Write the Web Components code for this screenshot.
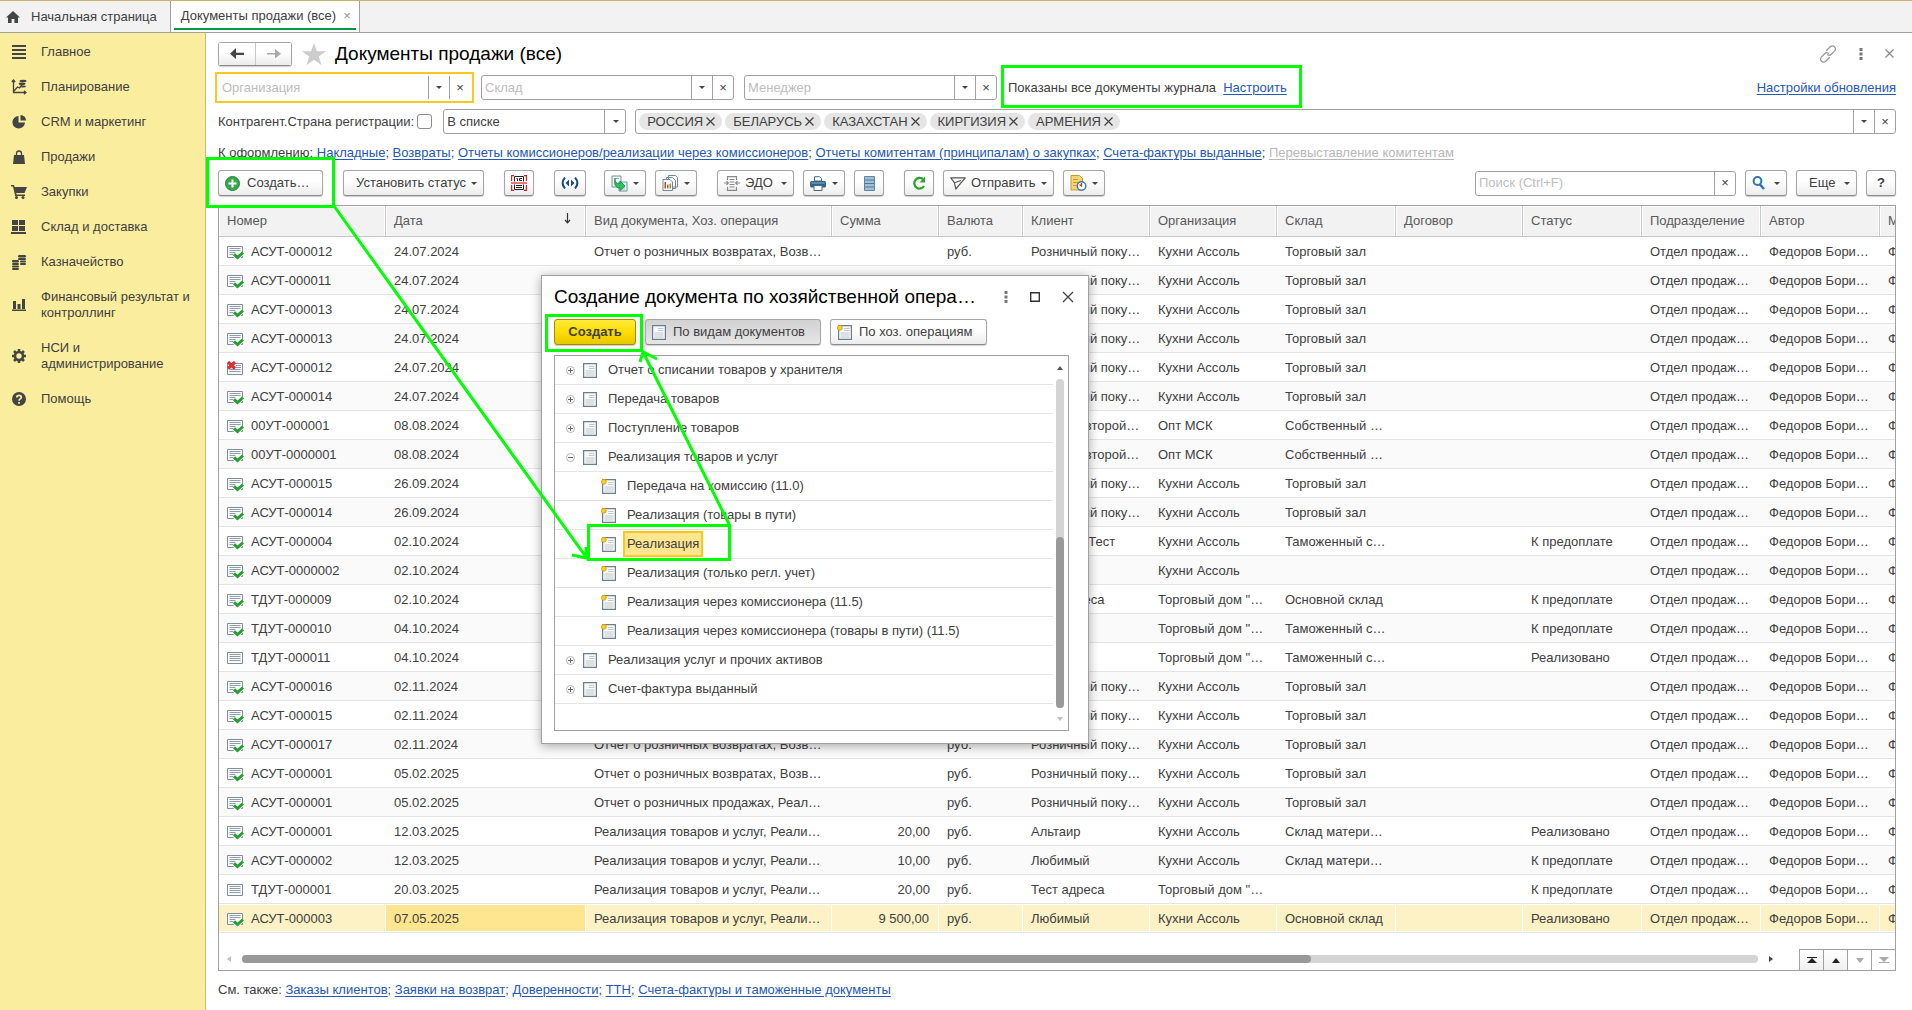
<!DOCTYPE html>
<html lang="ru">
<head>
<meta charset="utf-8">
<title>Документы продажи (все)</title>
<style>
  html, body { height: 100%; }
  body {
    margin: 0;
    overflow: hidden;
    background: #fff;
    color: #404040;
    font: 13px/16px "Liberation Sans", Arial, sans-serif;
  }
</style>
</head>
<body>
<sales-app></sales-app>

<script>
(function() {
  const ICONS = {
    home: ['0 0 14 14', '<path fill="#444" d="M7 1 0 7.6h2V13h3.600V9h2.800v4H12V7.600h2z"/>'],
    menu: ['0 0 14 14', '<path fill="#444" d="M0 0h14v2H0zm0 4h14v2H0zm0 4h14v2H0zm0 4h14v2H0z"/>'],
    plan: ['0 0 16 16', '<path fill="none" stroke="#444" stroke-width="1.300" d="M2.500 1v12.500H15M3 12l3.500-4 2 1 3-4M.8 3 2.500 1l1.700 2M13 11.800l2 1.700-2 1.700"/><g fill="#444"><ellipse cx="12" cy="2" rx="3.500" ry="1.200"/><ellipse cx="11" cy="4.800" rx="3.500" ry="1.200"/><ellipse cx="12" cy="7.500" rx="3" ry="1.100"/></g>'],
    pie: ['0 0 14 14', '<path fill="#444" d="M6.500 1v6.500H13A6.300 6.300 0 1 1 6.500 1z"/><path fill="#444" d="M8.500 0A5.500 5.500 0 0 1 14 5.500H8.500z"/>'],
    bag: ['0 0 12 15', '<path fill="#444" d="M1 5h10l1 9H0z"/><path fill="none" stroke="#444" stroke-width="1.300" d="M3.500 7V3.500a2.500 2.500 0 0 1 5 0V7"/>'],
    cart: ['0 0 16 14', '<path fill="#444" d="M0 0h3l.6 2H16l-2.500 6H5.200l.4 1.500H14V11H4.200L2 1.500H0z"/><circle cx="5.500" cy="12.500" r="1.500" fill="#444"/><circle cx="12" cy="12.500" r="1.500" fill="#444"/>'],
    stock: ['0 0 15 14', '<path fill="#444" d="M1 0h6v5H1zm7 0h6v5H8zM1 6h6v5H1zm7 0h6v5H8zM0 12h15v2H0z"/>'],
    coins: ['0 0 14 15', '<g fill="#444"><rect x="6" y="0" width="8" height="2.500" rx="1.200"/><rect x="6" y="3" width="8" height="2" rx="1"/><rect x="8" y="5.500" width="6" height="2" rx="1"/><rect x="8" y="8" width="6" height="2" rx="1"/><rect x="0" y="5" width="7" height="2.500" rx="1.200"/><rect x="0" y="8" width="7" height="2" rx="1"/><rect x="0" y="10.500" width="7" height="2" rx="1"/><rect x="0" y="13" width="7" height="2" rx="1"/></g>'],
    bars: ['0 0 14 12', '<path fill="#444" d="M1 2h3v8H1zm4.500 3h3v5h-3zM10 0h3v10h-3zM0 10.500h14V12H0z"/>'],
    gear: ['0 0 14 14', '<circle cx="7" cy="7" r="4" fill="none" stroke="#444" stroke-width="2.600"/><path stroke="#444" stroke-width="2.600" d="M7 0v2.500M7 11.500V14M0 7h2.500M11.500 7H14M2 2l1.800 1.800M10.200 10.200 12 12M12 2l-1.800 1.800M3.800 10.200 2 12"/>'],
    help: ['0 0 14 14', '<circle cx="7" cy="7" r="7" fill="#444"/><path fill="none" stroke="#fbed9e" stroke-width="1.800" d="M4.800 5.500C4.800 2.600 9.300 2.700 9.300 5.300 9.300 7 7 6.800 7 8.800M7 10v1.800"/>'],
    back: ['0 0 14 12', '<path fill="#444" d="M6 0v4.700h8v2.300H6v4L0 5.800z"/>'],
    forward: ['0 0 14 12', '<path fill="#aaa" d="M8 1v4h-8v1.600h8v4l6-4.800z"/>'],
    star: ['0 0 24 22', '<path fill="#ccc" d="m12 0 2.900 8.200H24l-7.200 5.200 2.600 8.600-7.400-5.200L4.600 22l2.600-8.600L0 8.200h9.100z"/>'],
    link: ['0 0 18 18', '<g fill="none" stroke="#999" stroke-width="1.300" stroke-linecap="round"><path d="m7.500 5.500 3.700-3.700a3 3 0 0 1 4.300 0 3 3 0 0 1 0 4.300l-3.200 3.200a3 3 0 0 1-3.700.5"/><path d="m10.500 12.500-3.700 3.700a3 3 0 0 1-4.300 0 3 3 0 0 1 0-4.300l3.200-3.200a3 3 0 0 1 3.700-.5"/></g>'],
    dots: ['0 0 4 12', '<path fill="#777" d="M.5 0h3v3h-3zm0 4.500h3v3h-3zm0 4.500h3v3h-3z"/>'],
    close: ['0 0 12 12', '<path stroke="currentColor" stroke-width="1.300" d="m1 1 10 10M11 1 1 11"/>'],
    cross: ['0 0 9 9', '<path stroke="currentColor" stroke-width="1.200" d="m.5.5 8 8M8.500.5l-8 8"/>'],
    square: ['0 0 10 10', '<path fill="none" stroke="#333" stroke-width="1.400" d="M.7.7h8.600v8.600H.7z"/>'],
    caret: ['0 0 6 3', '<path fill="#444" d="M0 0h6L3 3z"/>'],
    plus: ['0 0 15 15', '<circle cx="7.500" cy="7.500" r="7" fill="#36a84b" stroke="#26833a"/><path fill="#fff" d="M6.500 3.500h2v3h3v2h-3v3h-2v-3h-3v-2h3z"/>'],
    barcode: ['0 0 16 16', '<path fill="none" stroke="#d22" stroke-width="1.200" d="M3 .6H.6V6M13 .6h2.400V6M3 15.400H.6V10M13 15.400h2.400V10"/><path fill="none" stroke="#222" d="M3.500 6.500v-5h9v5M6.500 6V3.500h-1M11 3.500H8.500v2H11M3.500 9.500v5h9v-5"/><path stroke="#d22" stroke-width="1.200" d="M0 8h16"/><path stroke="#222" d="M5 10.500h6m-6 2h6"/>'],
    signal: ['0 0 18 12', '<path fill="none" stroke="#1d4f72" stroke-width="2" d="M4 .5Q-.8 6 4 11.500M14 .5q4.800 5.500 0 11"/><path fill="#1d4f72" d="M8 2.500v7L4.500 6zm2 0v7L13.500 6z"/>'],
    based: ['0 0 17 17', '<path fill="#eef3f6" stroke="#7890a0" d="M1 1h9v11H1zM8 7h8v9H8z"/><path stroke="#9fb0bc" d="M3 3.500h5M10 12h4m-4 2h4"/><path fill="#25c45c" stroke="#128a3c" stroke-width=".8" d="M4 3.500c0 4 1.500 5 5 5V6l5 5-5 4.500V13c-4 0-6.500-3-5-9.500z"/>'],
    report: ['0 0 17 16', '<path fill="#fff" stroke="#71889a" d="M6.500.5h7l2 2V12h-9zM4.500 2.500h6l3 3v8h-9z"/><path fill="#fff" stroke="#71889a" d="M1 4.500h7l2.500 2.500v8.500H1z"/><path fill="#e33" d="M2.500 7h1.500v6.500H2.500z"/><path fill="#2a9d3e" d="M5 9.500h1.500v4H5z"/><path fill="#e96a2c" d="M7.500 8.500H9v5H7.500z"/>'],
    edo: ['0 0 16 15', '<path fill="none" stroke="#888" stroke-width="1.200" d="M3.500 4V.6h9V4M3.500 11v3.400h9V11M5.500 3.500h5m-5 2.500h5m-5 2.500h5m-5 2.500h5M0 7h4M2.500 5.200 4.300 7 2.500 8.800M12 7h4M13.500 5.200 11.700 7l1.800 1.800"/>'],
    print: ['0 0 16 15', '<path fill="#fff" stroke="#466b88" d="M4.500 5V.7h5l2 2V5z"/><rect y="5" width="16" height="6.500" rx="1.500" fill="#34648c"/><path fill="#86aecb" d="M1.500 6.500h13v1h-13z"/><path fill="#fff" stroke="#466b88" d="M4 9.500h8v5H4z"/>'],
    list: ['0 0 11 15', '<path fill="#9dc0d8" stroke="#5d86a3" d="M.5.5h10v14H.5z"/><path stroke="#4e7896" d="M1 4h9M1 7.500h9M1 11h9"/>'],
    refresh: ['0 0 14 14', '<path fill="none" stroke="#2ba52e" stroke-width="2.300" d="M12 10.200A5.300 5.300 0 1 1 10.800 3"/><path fill="#2ba52e" d="M13 .5v6H7.500z"/>'],
    send: ['0 0 16 13', '<path fill="none" stroke="#555" stroke-width="1.200" stroke-linejoin="round" d="M.8.8h14.400L5.800 12 4.500 5.800zM4.500 5.800 11 3.500"/>'],
    schedule: ['0 0 17 16', '<path fill="#f7d774" stroke="#c79b2e" d="M1 .5h8.500l3 3V15H1z"/><path stroke="#c79b2e" d="M3 4.500h5m-5 3h5m-5 3h3"/><circle cx="11.500" cy="11" r="4.300" fill="#fff" stroke="#3b77a8" stroke-width="1.400"/><path fill="none" stroke="#c33" stroke-width="1.200" d="M9.500 9.500 11.500 11V8"/>'],
    search: ['0 0 13 14', '<circle cx="5.500" cy="5" r="3.900" fill="none" stroke="#2e77b5" stroke-width="2"/><path stroke="#2e77b5" stroke-width="2.600" d="m8 8.500 4 4.500"/>'],
    sort: ['0 0 7 11', '<path fill="none" stroke="#333" stroke-width="1.200" d="M3.500 0v9.500M1 7l2.500 2.800L6 7"/>'],
    doc: ['0 0 17 15', '<path fill="#fbfcfd" stroke="#7e8fa0" d="M.5 1.500h15v11H.5z"/><path stroke="#8f9dab" d="M2.500 3.500h11m-11 2h11m-11 2h11m-11 2h11"/>'],
    posted: ['0 0 17 15', '<path fill="#fbfcfd" stroke="#7e8fa0" d="M.5 1.500h15v11H.5z"/><path stroke="#8f9dab" d="M2.500 3.500h11m-11 2h11m-11 2h6m-6 2h4"/><path fill="none" stroke="#fff" stroke-width="5" d="m7 9.300 3.500 3.200L15.500 7.500"/><path fill="none" stroke="#24a02e" stroke-width="3" d="m7 9.300 3.500 3.200L16 7.500"/>'],
    deleted: ['0 0 17 15', '<path fill="#fbfcfd" stroke="#7e8fa0" d="M.5 2.500h15v11H.5z"/><path stroke="#8f9dab" d="M9 4.500h5M9 6.500h5M2.500 8.500h11m-11 2h11"/><path stroke="#dc3030" stroke-width="3.200" d="m1 1 7 6.500M8 1 1 7.500"/>'],
    kind: ['0 0 14 15', '<path fill="#f8f9fa" stroke="#6c7f8f" stroke-width="1.200" d="M.6.600h12.800v13.800H.6z"/><path stroke="#c3c9ce" stroke-width="1.200" d="M6 3.500h5.500M6 5.500h5.500M2.500 8h9m-9 2h9m-9 2h9"/>'],
    oper: ['0 0 15 15', '<path fill="#f8f9fa" stroke="#6c7f8f" stroke-width="1.200" d="M1.600.6h12.800v13.800H1.600z"/><path stroke="#c3c9ce" stroke-width="1.200" d="M7 3.500h5.500M7 5.500h5.500M3.500 8h9m-9 2h9m-9 2h9"/><circle cx="2.800" cy="2.800" r="2.500" fill="#fbce1f" stroke="#c79a1a" stroke-width=".7"/>'],
    expand: ['0 0 9 9', '<circle cx="4.500" cy="4.500" r="4" fill="#fff" stroke="#aaa" stroke-width=".9"/><path stroke="#666" d="M2 4.500h5M4.500 2v5"/>'],
    collapse: ['0 0 9 9', '<circle cx="4.500" cy="4.500" r="4" fill="#fff" stroke="#aaa" stroke-width=".9"/><path stroke="#666" d="M2 4.500h5"/>'],
    up: ['0 0 8 5', '<path fill="currentColor" d="m4 0 4 5H0z"/>'],
    upsmall: ['0 0 6 4', '<path fill="currentColor" d="m3 0 3 4H0z"/>'],
    down: ['0 0 8 5', '<path fill="currentColor" d="M0 0h8L4 5z"/>'],
    downsmall: ['0 0 6 4', '<path fill="currentColor" d="M0 0h6L3 4z"/>'],
    left: ['0 0 4 6', '<path fill="currentColor" d="M4 0v6L0 3z"/>'],
    right: ['0 0 4 6', '<path fill="currentColor" d="M0 0v6l4-3z"/>'],
    first: ['0 0 10 6', '<path fill="currentColor" d="M0 0h10v1H0zm5 1 5 5H0z"/>'],
    last: ['0 0 10 6', '<path fill="currentColor" d="M0 5h10v1H0zM0 0h10L5 5z"/>']
  };

  const LINK_CSS = 'a { color: #2558b5; text-decoration: underline; text-underline-offset: 2px; text-decoration-thickness: 1px; }';

  class UiIcon extends HTMLElement {
    connectedCallback() {
      const [box, body] = ICONS[this.getAttribute('name')];
      const size = box.split(' ');
      this.attachShadow({ mode: 'open' }).innerHTML = `
        <style>
          :host { display: inline-flex; flex: none; }
          svg { display: block; }
        </style>
        <svg viewBox="${box}" width="${size[2]}" height="${size[3]}" aria-hidden="true">${body}</svg>
      `;
    }
  }

  // Push button. kind: primary | pressed, menu adds the drop-down caret
  class UiButton extends HTMLElement {
    connectedCallback() {
      const icon = this.getAttribute('icon');
      const label = this.getAttribute('label');
      this.attachShadow({ mode: 'open' }).innerHTML = `
        <style>
          :host { display: inline-flex; flex: none; }
          button {
            display: flex;
            flex: 1;
            align-items: center;
            justify-content: center;
            gap: 7px;
            height: 26px;
            padding: 0 6px;
            border: 1px solid #a6a6a6;
            border-bottom-color: #8c8c8c;
            border-radius: 3px;
            background: linear-gradient(#fff 40%, #ececec);
            box-shadow: 0 1px 1px #0003;
            color: #404040;
            font: inherit;
            white-space: nowrap;
          }
          :host([text]) button { justify-content: flex-start; }
          :host([menu]) button { gap: 5px; }
          :host([menu]:not([icon])) button { padding-left: 12px; }
          .caret { margin-left: auto; }
          :host([kind=primary]) button {
            background: linear-gradient(#ffea3d, #fedd00 50%, #e8c800);
            border-color: #a08c00;
            font-weight: bold;
          }
          :host([kind=pressed]) button { background: linear-gradient(#d2d2d2, #e6e6e6); }
        </style>
        <button type="button" ${label ? `aria-label="${label}"` : ''}>
          ${icon ? `<ui-icon name="${icon}"></ui-icon>` : ''}
          <slot></slot>
          ${this.hasAttribute('menu') ? '<ui-icon class="caret" name="caret"></ui-icon>' : ''}
        </button>
      `;
    }
  }

  // Text field with optional drop-down and clear buttons
  class UiField extends HTMLElement {
    connectedCallback() {
      const hint = this.getAttribute('placeholder') || '';
      this.attachShadow({ mode: 'open' }).innerHTML = `
        <style>
          :host {
            display: flex;
            box-sizing: border-box;
            height: 25px;
            border: 1px solid #a0a0a0;
            border-radius: 3px;
            background: #fff;
          }
          :host([active]) { border-color: #fff; outline: 2px solid #fac81e; outline-offset: 1px; border-radius: 0; }
          ::slotted(*) { flex: none; }
          input {
            flex: 1;
            min-width: 0;
            border: 0;
            padding: 0 3px;
            background: none;
            font: inherit;
            outline: none;
          }
          input::placeholder { color: #bdbdbd; }
          button {
            width: 21px;
            padding: 0;
            border: 0;
            border-left: 1px solid #a0a0a0;
            background: none;
            display: flex;
            align-items: center;
            justify-content: center;
            font: inherit;
            color: #404040;
          }
        </style>
        <slot></slot>
        <input type="text" placeholder="${hint}" aria-label="${hint || this.getAttribute('label')}">
        ${this.hasAttribute('menu') ? '<button type="button" aria-label="Выбрать"><ui-icon name="caret"></ui-icon></button>' : ''}
        <button type="button" aria-label="Очистить">×</button>
      `;
    }
  }

  class UiChip extends HTMLElement {
    connectedCallback() {
      this.attachShadow({ mode: 'open' }).innerHTML = `
        <style>
          :host {
            display: flex;
            align-items: center;
            gap: 3px;
            height: 17px;
            padding: 0 7px 0 8px;
            border-radius: 9px;
            background: #e5e5e5;
          }
          button { display: flex; padding: 0; border: 0; background: none; color: #404040; }
        </style>
        <slot></slot>
        <button type="button" aria-label="Убрать"><ui-icon name="cross"></ui-icon></button>
      `;
    }
  }

  class TabBar extends HTMLElement {
    connectedCallback() {
      this.attachShadow({ mode: 'open' }).innerHTML = `
        <style>
          :host {
            display: flex;
            box-sizing: border-box;
            height: 33px;
            border-top: 1px solid #c9b36b;
            border-bottom: 1px solid #a0a0a0;
            background: #f2f2f2;
          }
          a {
            display: flex;
            align-items: center;
            gap: 11px;
            padding: 0 13px 0 6px;
            border-right: 1px solid #a0a0a0;
            color: #404040;
            text-decoration: none;
          }
          .current { box-sizing: border-box; padding: 0 0 2px; background: #fff; }
          .current span {
            display: flex;
            gap: 7px;
            box-sizing: border-box;
            height: 100%;
            align-items: center;
            margin: 0 3px;
            padding: 2px 5px 0 7px;
            border-bottom: 2px solid #009646;
          }
          i { font-style: normal; color: #999; }
        </style>
        <a href="#home"><ui-icon name="home"></ui-icon>Начальная страница</a>
        <a href="#sales" class="current"><span>Документы продажи (все) <i>×</i></span></a>
      `;
    }
  }

  class SideNav extends HTMLElement {
    connectedCallback() {
      const items = [
        ['menu', 'Главное'], ['plan', 'Планирование'], ['pie', 'CRM и маркетинг'],
        ['bag', 'Продажи'], ['cart', 'Закупки'], ['stock', 'Склад и доставка'],
        ['coins', 'Казначейство'], ['bars', 'Финансовый результат и контроллинг'],
        ['gear', 'НСИ и администрирование'], ['help', 'Помощь']
      ];
      this.attachShadow({ mode: 'open' }).innerHTML = `
        <style>
          :host {
            display: block;
            flex: none;
            box-sizing: border-box;
            width: 206px;
            padding-top: 1px;
            border-right: 1px solid #c9b97a;
            background: #fbed9e;
          }
          a {
            display: grid;
            grid-template-columns: 15px 1fr;
            align-items: center;
            gap: 15px;
            min-height: 35px;
            box-sizing: border-box;
            padding: 10px 10px 9px 11px;
            color: #404040;
            text-decoration: none;
          }
          ui-icon { justify-self: center; }
        </style>
        <nav>${items.map(([icon, text]) => `<a href="#${icon}"><ui-icon name="${icon}"></ui-icon>${text}</a>`).join('')}</nav>
      `;
    }
  }

  // "Label: link; link; link"
  class LinkRow extends HTMLElement {
    connectedCallback() {
      const links = this.getAttribute('links').split('|').map(text => {
        const off = text.startsWith('!');
        return `<a href="#"${off ? ' class="off"' : ''}>${off ? text.slice(1) : text}</a>`;
      });
      this.attachShadow({ mode: 'open' }).innerHTML = `
        <style>
          ${LINK_CSS}
          :host { display: block; padding-top: 2px; white-space: nowrap; }
          .off { color: #b8b8b8; }
        </style>
        <slot></slot> ${links.join('; ')}
      `;
    }
  }

  class JournalTable extends HTMLElement {
    connectedCallback() {
      const cols = [
        ['Номер', 167], ['Дата', 200], ['Вид документа, Хоз. операция', 246], ['Сумма', 107],
        ['Валюта', 84], ['Клиент', 127], ['Организация', 127], ['Склад', 119], ['Договор', 127],
        ['Статус', 119], ['Подразделение', 119], ['Автор', 119], ['Менеджер', 119]
      ];
      const back = 'Отчет о розничных возвратах, Возв…';
      const sold = 'Отчет о розничных продажах, Реал…';
      const sale = 'Реализация товаров и услуг, Реали…';
      const retail = 'Розничный поку…';
      const kitchen = 'Кухни Ассоль';
      const house = 'Торговый дом "…';
      const hall = 'Торговый зал';
      const customs = 'Таможенный с…';
      // state, number, date, kind, sum, client, organization, warehouse, status
      const rows = [
        ['posted', 'АСУТ-000012', '24.07.2024', back, '', retail, kitchen, hall, ''],
        ['posted', 'АСУТ-000011', '24.07.2024', back, '', retail, kitchen, hall, ''],
        ['posted', 'АСУТ-000013', '24.07.2024', back, '', retail, kitchen, hall, ''],
        ['posted', 'АСУТ-000013', '24.07.2024', sold, '', retail, kitchen, hall, ''],
        ['deleted', 'АСУТ-000012', '24.07.2024', sold, '', retail, kitchen, hall, ''],
        ['posted', 'АСУТ-000014', '24.07.2024', sold, '', retail, kitchen, hall, ''],
        ['posted', '00УТ-000001', '08.08.2024', sale, '', 'Магазин второй…', 'Опт МСК', 'Собственный …', ''],
        ['posted', '00УТ-0000001', '08.08.2024', sale, '', 'Магазин второй…', 'Опт МСК', 'Собственный …', ''],
        ['posted', 'АСУТ-000015', '26.09.2024', sold, '', retail, kitchen, hall, ''],
        ['posted', 'АСУТ-000014', '26.09.2024', back, '', retail, kitchen, hall, ''],
        ['posted', 'АСУТ-000004', '02.10.2024', sale, '', 'Магазин: Тест', kitchen, customs, 'К предоплате'],
        ['posted', 'АСУТ-0000002', '02.10.2024', sale, '', 'Альтаир', kitchen, '', ''],
        ['posted', 'ТДУТ-000009', '02.10.2024', sale, '', 'Тест адреса', house, 'Основной склад', 'К предоплате'],
        ['posted', 'ТДУТ-000010', '04.10.2024', sale, '', 'Альтаир', house, customs, 'К предоплате'],
        ['doc', 'ТДУТ-000011', '04.10.2024', sale, '', 'Альтаир', house, customs, 'Реализовано'],
        ['posted', 'АСУТ-000016', '02.11.2024', sold, '', retail, kitchen, hall, ''],
        ['posted', 'АСУТ-000015', '02.11.2024', back, '', retail, kitchen, hall, ''],
        ['posted', 'АСУТ-000017', '02.11.2024', back, '', retail, kitchen, hall, ''],
        ['posted', 'АСУТ-000001', '05.02.2025', back, '', retail, kitchen, hall, ''],
        ['posted', 'АСУТ-000001', '05.02.2025', sold, '', retail, kitchen, hall, ''],
        ['posted', 'АСУТ-000001', '12.03.2025', sale, '20,00', 'Альтаир', kitchen, 'Склад матери…', 'Реализовано'],
        ['posted', 'АСУТ-000002', '12.03.2025', sale, '10,00', 'Любимый', kitchen, 'Склад матери…', 'К предоплате'],
        ['doc', 'ТДУТ-000001', '20.03.2025', sale, '20,00', 'Тест адреса', house, '', 'К предоплате'],
        ['posted', 'АСУТ-000003', '07.05.2025', sale, '9 500,00', 'Любимый', kitchen, 'Основной склад', 'Реализовано']
      ];
      const head = cols.map(([text]) => `<th scope="col"><div>${text}${text === 'Дата' ? '<ui-icon name="sort"></ui-icon>' : ''}</div></th>`).join('');
      const body = rows.map(([state, num, date, kind, sum, client, org, store, status], i) => `
        <tr${i === rows.length - 1 ? ' class="selected"' : ''}>
          <td><div class="num"><ui-icon name="${state}"></ui-icon>${num}</div></td>
          <td>${date}</td><td>${kind}</td><td class="sum">${sum}</td><td>руб.</td>
          <td>${client}</td><td>${org}</td><td>${store}</td><td></td><td>${status}</td>
          <td>Отдел продаж…</td><td>Федоров Бори…</td><td>Федоров Бори…</td>
        </tr>`).join('');

      this.attachShadow({ mode: 'open' }).innerHTML = `
        <style>
          :host {
            display: flex;
            flex-direction: column;
            justify-content: space-between;
            min-height: 0;
            border: 1px solid #a0a0a0;
            overflow: hidden;
          }
          table { table-layout: fixed; width: 1780px; border-spacing: 0; }
          th, td {
            box-sizing: border-box;
            padding: 0 0 0 8px;
            text-align: left;
            font-weight: normal;
            white-space: nowrap;
            overflow: hidden;
          }
          th {
            height: 31px;
            border-right: 1px solid #c8c8c8;
            border-bottom: 1px solid #c8c8c8;
            background: #f2f2f2;
            box-shadow: inset 1px 1px #fff, inset -1px 0 #fff;
            color: #595959;
          }
          th div { display: flex; justify-content: space-between; padding-right: 14px; }
          td { height: 29px; padding-top: 2px; border-bottom: 1px solid #e4e4e4; }
          tr:nth-child(even) td { background: #fafafa; }
          .num { display: flex; align-items: center; gap: 7px; }
          .sum { text-align: right; padding-right: 9px; }
          tr.selected td { background: #fdf1c6; border-right: 1px solid #fff; box-shadow: inset 0 1px #fff, inset 0 -1px #fff; }
          tr.selected td:nth-child(2) { background: #fee58f; }
          footer { display: flex; justify-content: space-between; align-items: flex-end; height: 21px; }
          .scroll { display: flex; align-items: center; gap: 11px; flex: 1; padding: 0 26px 7px 8px; color: #444; }
          .scroll ui-icon:first-child { color: #c0c0c0; }
          .track { flex: 1; height: 8px; border-radius: 4px; background: #d4d4d4; }
          .thumb { width: 70.5%; height: 8px; border-radius: 4px; background: #999; }
          .steps { display: flex; border-top: 1px solid #a0a0a0; }
          .steps button {
            display: flex;
            align-items: center;
            justify-content: center;
            width: 24px;
            height: 20px;
            padding: 0;
            border: 0;
            border-left: 1px solid #a0a0a0;
            background: linear-gradient(#fff, #f0f0f0);
            color: #222;
          }
          .steps button:disabled { background: #fff; color: #aaa; }
        </style>
        <table>
          <colgroup>${cols.map(([, width]) => `<col style="width:${width}px">`).join('')}</colgroup>
          <thead><tr>${head}</tr></thead>
          <tbody>${body}</tbody>
        </table>
        <footer>
          <div class="scroll">
            <ui-icon name="left"></ui-icon>
            <div class="track"><div class="thumb"></div></div>
            <ui-icon name="right"></ui-icon>
          </div>
          <div class="steps">
            <button type="button" aria-label="В начало"><ui-icon name="first"></ui-icon></button>
            <button type="button" aria-label="Вверх"><ui-icon name="up"></ui-icon></button>
            <button type="button" aria-label="Вниз" disabled><ui-icon name="down"></ui-icon></button>
            <button type="button" aria-label="В конец" disabled><ui-icon name="last"></ui-icon></button>
          </div>
        </footer>
      `;
    }
  }

  class OperationDialog extends HTMLElement {
    connectedCallback() {
      const nodes = [
        ['expand', 'Отчет о списании товаров у хранителя'],
        ['expand', 'Передача товаров'],
        ['expand', 'Поступление товаров'],
        ['collapse', 'Реализация товаров и услуг'],
        ['', 'Передача на комиссию (11.0)'],
        ['', 'Реализация (товары в пути)'],
        ['', 'Реализация'],
        ['', 'Реализация (только регл. учет)'],
        ['', 'Реализация через комиссионера (11.5)'],
        ['', 'Реализация через комиссионера (товары в пути) (11.5)'],
        ['expand', 'Реализация услуг и прочих активов'],
        ['expand', 'Счет-фактура выданный']
      ];
      this.attachShadow({ mode: 'open' }).innerHTML = `
        <style>
          :host {
            display: flex;
            flex-direction: column;
            box-sizing: border-box;
            padding: 8px 12px 12px;
            border: 1px solid #a0a0a0;
            background: #fff;
            box-shadow: 0 2px 10px #0005;
          }
          header { display: flex; align-items: center; gap: 22px; height: 26px; padding-right: 2px; }
          h2 { flex: 1; margin: 0; color: #000; font-size: 19px; font-weight: normal; line-height: 24px; white-space: nowrap; }
          header button { display: flex; padding: 0; border: 0; background: none; color: #444; }
          .bar { display: flex; gap: 9px; margin: 9px 0 10px; }
          .bar ui-button:first-child { width: 82px; }
          .bar ui-button:nth-child(2) { width: 176px; }
          .bar ui-button:nth-child(3) { width: 157px; }
          .tree { display: flex; flex: 1; margin-right: 7px; border: 1px solid #a0a0a0; }
          ul { flex: 1; margin: 0; padding: 0; list-style: none; }
          li {
            display: flex;
            align-items: center;
            box-sizing: border-box;
            height: 29px;
            padding-left: 11px;
            border-bottom: 1px solid #e4e4e4;
          }
          li ui-icon + ui-icon { margin: 0 7px 0 8px; }
          li.child { padding-left: 46px; }
          li span { box-sizing: border-box; height: 26px; padding: 3px 2px; border: 2px solid transparent; line-height: 16px; }
          li.child span { margin-left: 7px; }
          li.selected span { border-color: #fac81e; background: #fee58f; }
          .scroll {
            display: flex;
            flex-direction: column;
            align-items: center;
            gap: 9px;
            width: 15px;
            padding: 10px 2px 9px 0;
            color: #555;
            box-sizing: border-box;
          }
          .scroll ui-icon:last-child { color: #c0c0c0; }
          .track { display: flex; align-items: flex-end; flex: 1; width: 8px; border-radius: 4px; background: #d4d4d4; }
          .thumb { width: 8px; height: 52%; border-radius: 4px; background: #999; }
        </style>
        <header>
          <h2>Создание документа по хозяйственной опера…</h2>
          <button type="button" aria-label="Меню"><ui-icon name="dots"></ui-icon></button>
          <button type="button" aria-label="Развернуть"><ui-icon name="square"></ui-icon></button>
          <button type="button" aria-label="Закрыть"><ui-icon name="close"></ui-icon></button>
        </header>
        <div class="bar">
          <ui-button kind="primary">Создать</ui-button>
          <ui-button kind="pressed" icon="kind" text>По видам документов</ui-button>
          <ui-button icon="oper" text>По хоз. операциям</ui-button>
        </div>
        <div class="tree">
          <ul>${nodes.map(([state, text]) => `
            <li class="${state ? '' : 'child'}${text === 'Реализация' ? ' selected' : ''}">
              ${state ? `<ui-icon name="${state}"></ui-icon><ui-icon name="kind"></ui-icon>` : '<ui-icon name="oper"></ui-icon>'}
              <span>${text}</span>
            </li>`).join('')}</ul>
          <div class="scroll">
            <ui-icon name="upsmall"></ui-icon>
            <div class="track"><div class="thumb"></div></div>
            <ui-icon name="downsmall"></ui-icon>
          </div>
        </div>
      `;
    }
  }

  // Green marks drawn over the form
  class HintLayer extends HTMLElement {
    connectedCallback() {
      this.attachShadow({ mode: 'open' }).innerHTML = `
        <style>
          :host { position: absolute; inset: 0; pointer-events: none; }
          svg { display: block; width: 100%; height: 100%; }
        </style>
        <svg fill="none" stroke="#0f0" stroke-width="3" aria-hidden="true">
          <rect x="207.500" y="158.500" width="126" height="48"/>
          <rect x="1002.500" y="66.500" width="298" height="40"/>
          <rect x="546.500" y="315.500" width="95" height="35"/>
          <rect x="588.500" y="525.500" width="141" height="34"/>
          <path d="M334 206 586 557M572 555l14 3V547"/>
          <path d="M730 526 643 352M640 362l3-10 14 7"/>
        </svg>
      `;
    }
  }

  class SalesApp extends HTMLElement {
    connectedCallback() {
      this.attachShadow({ mode: 'open' }).innerHTML = `
        <style>
          ${LINK_CSS}
          :host { display: flex; flex-direction: column; height: 100vh; position: relative; }
          .page { display: flex; flex: 1; min-height: 0; }
          main {
            display: flex;
            flex: 1;
            flex-direction: column;
            gap: 9px;
            min-width: 0;
            box-sizing: border-box;
            padding: 8px 16px 12px 12px;
          }
          .row { display: flex; align-items: center; height: 25px; }
          .push { flex: 1; }
          .history { display: flex; margin-right: 10px; border: 1px solid #a6a6a6; border-bottom-color: #8c8c8c; border-radius: 3px; box-shadow: 0 1px 1px #0003; }
          .history button {
            display: flex;
            align-items: center;
            justify-content: center;
            width: 36px;
            height: 22px;
            padding: 0;
            border: 0;
            background: linear-gradient(#fff 40%, #ececec);
          }
          .history button + button { border-left: 1px solid #c8c8c8; }
          h1 { margin: 0 0 0 9px; color: #000; font-size: 19px; font-weight: normal; line-height: 24px; }
          .window { display: flex; align-items: center; gap: 22px; padding-right: 2px; color: #888; }
          .window button { display: flex; padding: 0; border: 0; background: none; color: inherit; font: inherit; }
          .filters { gap: 10px; }
          .filters ui-field { width: 253px; }
          .shown { padding: 0 1px; white-space: pre; }
          .country input { box-sizing: border-box; width: 15px; height: 15px; margin: 0 11px 0 3px; appearance: none; border: 1px solid #8c8c8c; border-radius: 3px; }
          .select { display: grid; width: 183px; margin-right: 9px; }
          .select > * { grid-area: 1 / 1; }
          select {
            height: 25px;
            padding: 0 3px;
            appearance: none;
            border: 1px solid #a0a0a0;
            border-radius: 3px;
            background: #fff;
            color: #404040;
            font: inherit;
          }
          .select span {
            display: flex;
            align-items: center;
            justify-content: center;
            justify-self: end;
            width: 21px;
            margin: 1px 0;
            border-left: 1px solid #a0a0a0;
            pointer-events: none;
          }
          .country ui-field { flex: 1; align-items: stretch; }
          .chips { display: flex; align-items: center; gap: 3px; padding-left: 3px; }
          .tools { gap: 9px; height: 26px; }
          .gap { margin-left: 11px; }
          .icon { width: 30px; }
          .drop { width: 42px; }
          .tools ui-field { width: 261px; }
          journal-table { flex: 1; }
          operation-dialog { position: absolute; left: 541px; top: 275px; width: 548px; height: 469px; }
        </style>
        <tab-bar></tab-bar>
        <div class="page">
          <side-nav></side-nav>
          <main>
            <div class="row">
              <div class="history">
                <button type="button" aria-label="Назад"><ui-icon name="back"></ui-icon></button>
                <button type="button" aria-label="Вперед"><ui-icon name="forward"></ui-icon></button>
              </div>
              <ui-icon name="star"></ui-icon>
              <h1>Документы продажи (все)</h1>
              <div class="push"></div>
              <div class="window">
                <button type="button" aria-label="Ссылка"><ui-icon name="link"></ui-icon></button>
                <button type="button" aria-label="Меню"><ui-icon name="dots"></ui-icon></button>
                <button type="button" aria-label="Закрыть"><ui-icon name="cross"></ui-icon></button>
              </div>
            </div>
            <div class="row filters">
              <ui-field placeholder="Организация" menu active></ui-field>
              <ui-field placeholder="Склад" menu></ui-field>
              <ui-field placeholder="Менеджер" menu></ui-field>
              <div class="shown">Показаны все документы журнала  <a href="#setup">Настроить</a></div>
              <div class="push"></div>
              <a href="#update">Настройки обновления</a>
            </div>
            <div class="row country">
              <label for="use">Контрагент.Страна регистрации:</label>
              <input type="checkbox" id="use">
              <div class="select">
                <select aria-label="Вид сравнения"><option>В списке</option></select>
                <span><ui-icon name="caret"></ui-icon></span>
              </div>
              <ui-field label="Страны" menu>
                <div class="chips">
                  <ui-chip>РОССИЯ</ui-chip>
                  <ui-chip>БЕЛАРУСЬ</ui-chip>
                  <ui-chip>КАЗАХСТАН</ui-chip>
                  <ui-chip>КИРГИЗИЯ</ui-chip>
                  <ui-chip>АРМЕНИЯ</ui-chip>
                </div>
              </ui-field>
            </div>
            <link-row links="Накладные|Возвраты|Отчеты комиссионеров/реализации через комиссионеров|Отчеты комитентам (принципалам) о закупках|Счета-фактуры выданные|!Перевыставление комитентам">К оформлению:</link-row>
            <div class="row tools">
              <ui-button icon="plus" text style="width:105px">Создать…</ui-button>
              <ui-button class="gap" menu style="width:141px">Установить статус</ui-button>
              <ui-button class="icon gap" icon="barcode" label="Штрихкод"></ui-button>
              <ui-button class="icon gap" icon="signal" label="Обмен"></ui-button>
              <ui-button class="drop gap" icon="based" label="Создать на основании" menu></ui-button>
              <ui-button class="drop" icon="report" label="Отчеты" menu></ui-button>
              <ui-button class="gap" icon="edo" text menu style="width:77px">ЭДО</ui-button>
              <ui-button class="drop" icon="print" label="Печать" menu></ui-button>
              <ui-button class="icon" icon="list" label="Реестр"></ui-button>
              <ui-button class="icon gap" icon="refresh" label="Обновить"></ui-button>
              <ui-button icon="send" text menu style="width:111px">Отправить</ui-button>
              <ui-button class="drop" icon="schedule" label="Напоминание" menu></ui-button>
              <div class="push"></div>
              <ui-field placeholder="Поиск (Ctrl+F)"></ui-field>
              <ui-button class="drop" icon="search" label="Найти" menu></ui-button>
              <ui-button menu style="width:61px">Еще</ui-button>
              <ui-button class="icon"><b>?</b></ui-button>
            </div>
            <journal-table></journal-table>
            <link-row links="Заказы клиентов|Заявки на возврат|Доверенности|ТТН|Счета-фактуры и таможенные документы">См. также:</link-row>
          </main>
        </div>
        <operation-dialog role="dialog"></operation-dialog>
        <hint-layer></hint-layer>
      `;
    }
  }

  customElements.define('ui-icon', UiIcon);
  customElements.define('ui-button', UiButton);
  customElements.define('ui-field', UiField);
  customElements.define('ui-chip', UiChip);
  customElements.define('tab-bar', TabBar);
  customElements.define('side-nav', SideNav);
  customElements.define('link-row', LinkRow);
  customElements.define('journal-table', JournalTable);
  customElements.define('operation-dialog', OperationDialog);
  customElements.define('hint-layer', HintLayer);
  customElements.define('sales-app', SalesApp);
})();
</script>
</body>
</html>
